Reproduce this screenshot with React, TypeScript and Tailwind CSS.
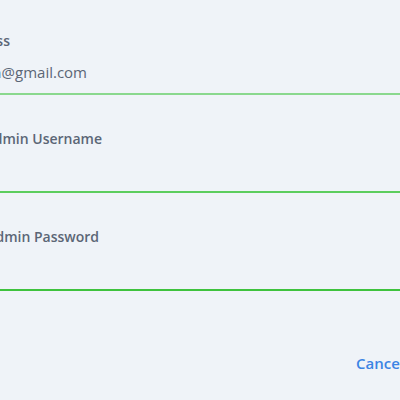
import React from "react";

const label = "text-[14px] leading-[18px] font-semibold whitespace-nowrap text-right";

const App = () => {
  return (
    <div
      className="w-[400px] h-[400px] overflow-hidden bg-[#eff3f8] text-[#5b6676]"
      style={{ fontFamily: "'Open Sans', sans-serif" }}
    >
      <div className="pt-[32px]">
        <div className="border-b-2 border-[#8ad88e] pb-[11px]">
          <div className={`${label} -ml-[190px] w-[200px]`}>Email Address</div>
          <div className="-ml-[213px] mt-[12px] w-[300px] text-right text-[15px] leading-[20px] whitespace-nowrap">
            admin@gmail.com
          </div>
        </div>
        <div className="border-b-2 border-[#5ccd5e] pt-[35px]">
          <div className={`${label} -ml-[98px] w-[200px]`}>Admin Username</div>
          <div className="h-[43px]" />
        </div>
        <div className="border-b-2 border-[#3ec23e] pt-[35px]">
          <div className={`${label} -ml-[101px] w-[200px]`}>Admin Password</div>
          <div className="h-[43px]" />
        </div>
        <div className="flex pl-[356px] pt-[62px]">
          <button className="text-[15px] leading-[20px] font-semibold text-[#3b84e4] whitespace-nowrap">
            Cancel
          </button>
        </div>
      </div>
    </div>
  );
};

export default App;
